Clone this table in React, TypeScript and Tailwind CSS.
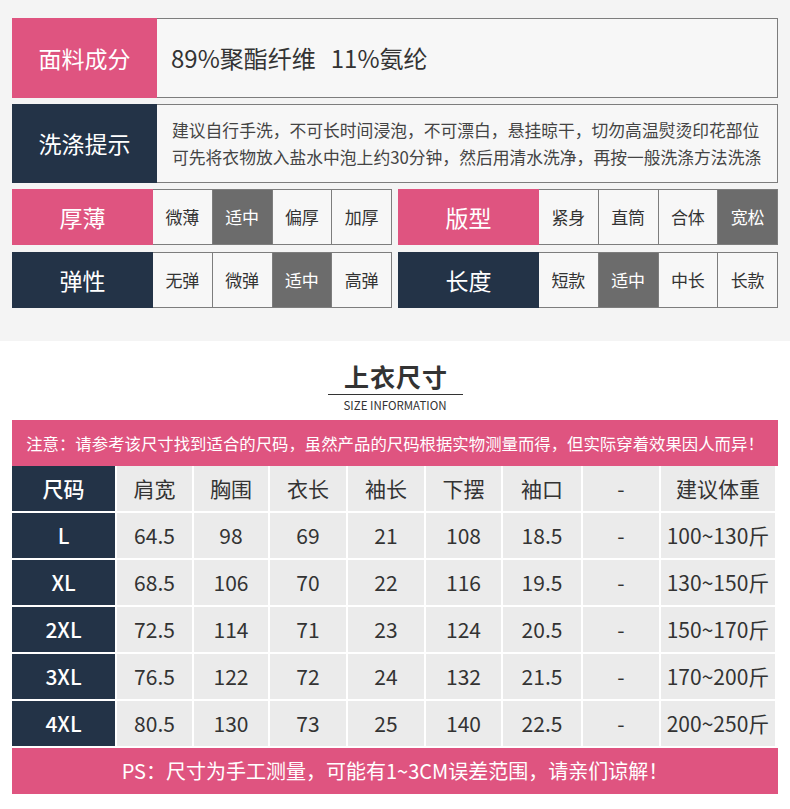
import React from 'react';

const font = { fontFamily: '"Noto Sans CJK SC", "Noto Sans", sans-serif' };

const OptionRow = ({ label, color, options, active }: { label: string; color: string; options: string[]; active: number }) => (
  <div className="flex flex-1 h-full">
    <div className={`w-[141px] flex items-center justify-center text-white text-[23px] ${color}`}>{label}</div>
    <div className="flex flex-1 border-y border-r border-[#7d7d7d]">
      {options.map((o, i) => (
        <div
          key={o}
          className={`flex-1 flex items-center justify-center text-[17px] ${i > 0 ? 'border-l border-[#7d7d7d]' : ''} ${
            i === active ? 'bg-[#6c6c6c] text-white' : 'bg-[#f7f7f7] text-[#333]'
          }`}
        >
          {o}
        </div>
      ))}
    </div>
  </div>
);

const cols = ['尺码', '肩宽', '胸围', '衣长', '袖长', '下摆', '袖口', '-', '建议体重'];
const rows = [
  ['L', '64.5', '98', '69', '21', '108', '18.5', '-', '100~130斤'],
  ['XL', '68.5', '106', '70', '22', '116', '19.5', '-', '130~150斤'],
  ['2XL', '72.5', '114', '71', '23', '124', '20.5', '-', '150~170斤'],
  ['3XL', '76.5', '122', '72', '24', '132', '21.5', '-', '170~200斤'],
  ['4XL', '80.5', '130', '73', '25', '140', '22.5', '-', '200~250斤'],
];

const App = () => {
  return (
    <div className="w-[790px] h-[809px] bg-white" style={font}>
      {/* material info */}
      <div className="bg-[#f4f4f4] h-[341px] px-3 pt-[18px]">
        <div className="flex h-[80px]">
          <div className="w-[145px] bg-[#df5480] flex items-center justify-center text-white text-[23px]">面料成分</div>
          <div className="flex-1 flex items-center pl-[14px] border-y border-r border-[#7d7d7d] bg-[#f7f7f7] text-[#333] text-[24px]">
            <span>89%聚酯纤维</span>
            <span className="ml-[15px]">11%氨纶</span>
          </div>
        </div>
        <div className="flex h-[79px] mt-[6px]">
          <div className="w-[145px] bg-[#233347] flex items-center justify-center text-white text-[23px]">洗涤提示</div>
          <div className="flex-1 flex flex-col justify-center pl-[15px] border-y border-r border-[#7d7d7d] bg-[#f7f7f7] text-[#444] text-[16.8px] leading-[27px]">
            <p>建议自行手洗，不可长时间浸泡，不可漂白，悬挂晾干，切勿高温熨烫印花部位</p>
            <p>可先将衣物放入盐水中泡上约30分钟，然后用清水洗净，再按一般洗涤方法洗涤</p>
          </div>
        </div>
        <div className="flex gap-[6px] h-[56px] mt-[6px]">
          <OptionRow label="厚薄" color="bg-[#df5480]" options={['微薄', '适中', '偏厚', '加厚']} active={1} />
          <OptionRow label="版型" color="bg-[#df5480]" options={['紧身', '直筒', '合体', '宽松']} active={3} />
        </div>
        <div className="flex gap-[6px] h-[56px] mt-[7px]">
          <OptionRow label="弹性" color="bg-[#233347]" options={['无弹', '微弹', '适中', '高弹']} active={2} />
          <OptionRow label="长度" color="bg-[#233347]" options={['短款', '适中', '中长', '长款']} active={1} />
        </div>
      </div>

      {/* size chart */}
      <div className="px-3">
        <div className="flex flex-col items-center pt-[18px]">
          <h2 className="text-[25px] font-bold text-[#333] leading-[34px] tracking-[1px] pl-[2px]">上衣尺寸</h2>
          <div className="w-[135px] h-px bg-[#333] mt-[1px]"></div>
          <div className="text-[11.5px] text-[#333] leading-[16px] mt-[2px]">SIZE INFORMATION</div>
        </div>
        <div className="mt-[7px] h-[46px] bg-[#df5480] flex items-center justify-center text-white text-[16.4px]">
          注意：请参考该尺寸找到适合的尺码，虽然产品的尺码根据实物测量而得，但实际穿着效果因人而异！
        </div>
        <div className="grid grid-cols-[105px_77px_76px_78px_78px_77px_80px_78px_116px] auto-rows-[47px] bg-white">
          {[cols, ...rows].map((r, ri) =>
            r.map((c, ci) => (
              <div
                key={`${ri}-${ci}`}
                className={`flex items-center justify-center text-[21px] border-r-2 border-b-2 border-white ${
                  ci === 0 ? 'bg-[#233347] text-white font-medium' : 'bg-[#ebebeb] text-[#333]'
                } ${ci === 8 ? 'border-r-0' : ''}`}
              >
                {c}
              </div>
            ))
          )}
        </div>
        <div className="h-[46px] bg-[#df5480] flex items-center justify-center text-white text-[20px]">
          PS：尺寸为手工测量，可能有1~3CM误差范围，请亲们谅解！
        </div>
      </div>
    </div>
  );
};

export default App;
